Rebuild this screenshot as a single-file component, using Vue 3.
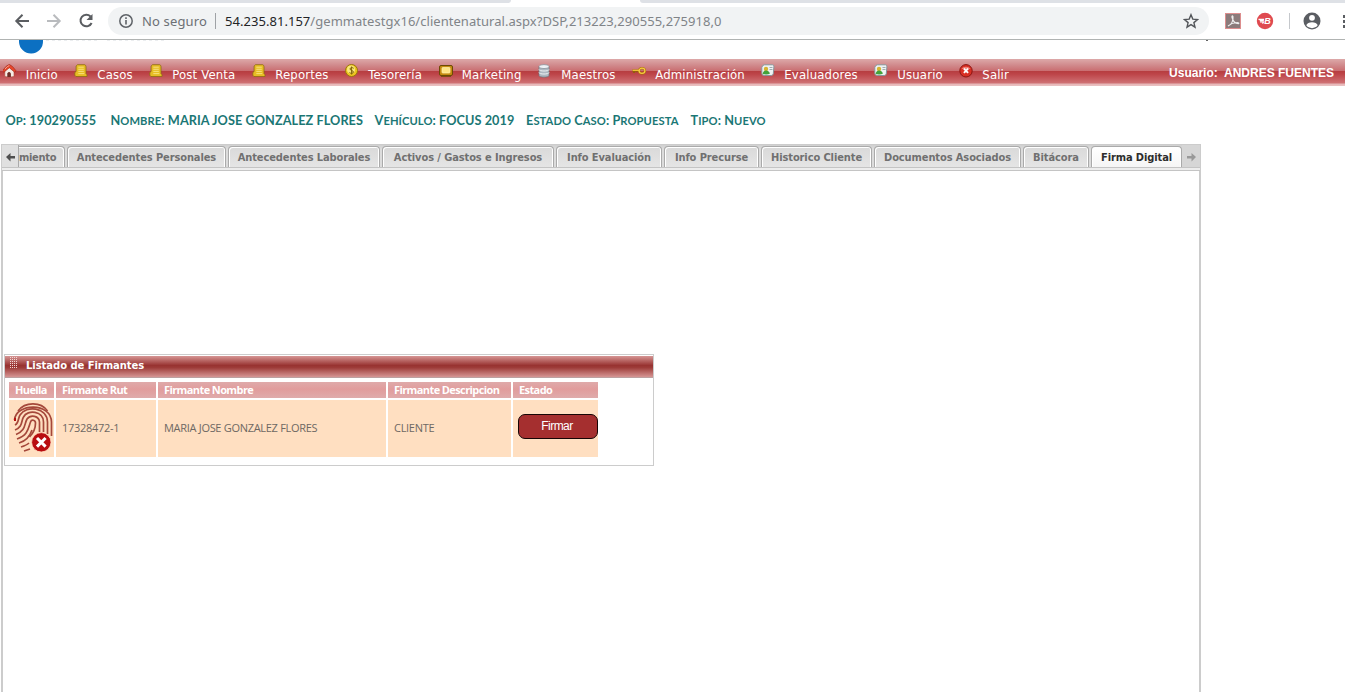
<script setup>
const menu = [
  { label: 'Inicio', icon: 'home', w: 71.5 },
  { label: 'Casos', icon: 'note', w: 75 },
  { label: 'Post Venta', icon: 'note', w: 103 },
  { label: 'Reportes', icon: 'note', w: 93 },
  { label: 'Tesorería', icon: 'coin', w: 93.5 },
  { label: 'Marketing', icon: 'screen', w: 99.5 },
  { label: 'Maestros', icon: 'db', w: 94 },
  { label: 'Administración', icon: 'key', w: 129 },
  { label: 'Evaluadores', icon: 'card', w: 113 },
  { label: 'Usuario', icon: 'card', w: 85 },
  { label: 'Salir', icon: 'close', w: 60 },
]
const facts = [
  { text: 'Op: 190290555', w: 105 },
  { text: 'Nombre: MARIA JOSE GONZALEZ FLORES', w: 264 },
  { text: 'Vehículo: FOCUS 2019', w: 151.5 },
  { text: 'Estado Caso: Propuesta', w: 164.5 },
  { text: 'Tipo: Nuevo', w: 90 },
].map((f) => ({
  ...f,
  runs: f.text.split(/([a-zí]+)/).filter(Boolean).map((s) => ({ s, small: /^[a-zí]/.test(s) })),
}))
const tabs = [
  { label: 'Antecedentes Personales', w: 159 },
  { label: 'Antecedentes Laborales', w: 152 },
  { label: 'Activos / Gastos e Ingresos', w: 172 },
  { label: 'Info Evaluación', w: 106 },
  { label: 'Info Precurse', w: 95 },
  { label: 'Historico Cliente', w: 111 },
  { label: 'Documentos Asociados', w: 147 },
  { label: 'Bitácora', w: 66 },
  { label: 'Firma Digital', w: 91, active: true },
]
</script>

<template>
  <div class="page">
    <div class="strip"><i class="s1"></i><i class="s2"></i></div>
    <div class="toolbar">
      <svg class="nav" width="100" height="30" viewBox="0 0 100 30" fill="none" stroke-width="2">
        <path d="M29 18H17M22.500 11.800L16.300 18l6.200 6.200" stroke="#5a5d61" />
        <path d="M47 18h12M53.500 11.800L59.700 18l-6.200 6.200" stroke="#b9bbbe" />
        <path d="M90.500 13.500A5.800 5.800 0 1 0 91.600 20" stroke="#5a5d61" />
        <path d="M92.500 11v6h-6z" fill="#5a5d61" />
      </svg>
      <div class="address">
        <svg class="info" width="16" height="16" viewBox="0 0 16 16">
          <circle cx="8" cy="8" r="6.200" fill="none" stroke="#5f6368" stroke-width="1.500" />
          <path d="M7.200 7h1.600v4.500H7.200zM7.200 4.300h1.600v1.600H7.200z" fill="#5f6368" />
        </svg>
        <span class="secure">No seguro</span>
        <i class="bar"></i>
        <span class="url"><b>54.235.81.157</b>/gemmatestgx16/clientenatural.aspx?DSP,213223,290555,275918,0</span>
        <svg class="star" width="16" height="16" viewBox="0 0 16 16">
          <path d="M8 1.700l1.800 4.400 4.700.4-3.600 3.100 1.100 4.600L8 11.700l-4 2.500 1.100-4.600-3.600-3.100 4.700-.4z" fill="none" stroke="#53565a" stroke-width="1.400" />
        </svg>
      </div>
      <svg class="exts" width="129" height="30" viewBox="0 0 129 30">
        <rect x="9.500" y="10.500" width="15" height="15" fill="#8b7b7b" stroke="#dc8e8e" />
        <path d="M12 23c3.500-1 5.500-5.500 5-9.500-.3-1.400-1.500-.5-1 1 1 3.600 3 6 6.300 6.200 1.300-.4.300-1.500-1.800-1.200-3 .3-6 1.300-8.500 3.500" fill="none" stroke="#eee" stroke-width="1.100" />
        <circle cx="49" cy="18" r="8.200" fill="#df4a50" />
        <path d="M42.500 16.300h5l-.3 1.300h-3.500M44 19h3.500l-1 1.600" fill="none" stroke="#fff" stroke-width="1.200" />
        <text x="48.200" y="21.200" class="ext-letter">B</text>
        <path d="M73.500 10v16" stroke="#c5c8cc" />
        <circle cx="96" cy="18" r="8.500" fill="#5a5d62" />
        <circle cx="96" cy="14.800" r="2.900" fill="#fff" />
        <path d="M90.300 22.200c1-4 10.400-4 11.400 0a7 7 0 0 1-11.400 0z" fill="#fff" />
        <path d="M127 12h2v3h-2zM127 17h2v3h-2zM127 22h2v3h-2z" fill="#5a5d62" />
      </svg>
    </div>

    <div class="masthead">
      <svg width="1345" height="19" viewBox="0 0 1345 19">
        <path d="M19 0h24v1a12 12 0 0 1-24 1z" fill="#0c70c2" />
        <path d="M46 .5h52M107 .5h60" stroke="#eceef0" stroke-dasharray="3 3" />
        <path d="M1207 0v1" stroke="#333" stroke-width="1.500" />
      </svg>
    </div>

    <nav class="menu">
      <div v-for="m in menu" :key="m.label" class="item" :style="{ width: m.w + 'px' }">
        <svg width="14" height="14" viewBox="0 0 14 14">
          <g v-if="m.icon === 'home'">
            <path d="M1.800 7L6 3l5 4v5.500q-4.500 1-9.200 0z" fill="#f6ece6" stroke="#b04a3c" stroke-width=".6" />
            <path d="M4.300 13V9.500q1.700-2.800 3.600 0V13z" fill="#6e2b25" />
            <path d="M-.5 6.800Q3.300 1 6.300.4 9.500 1.500 13 6.800L11.800 8.300 6.300 3.800.8 8.300z" fill="#e8472c" stroke="#9b2417" stroke-width=".6" />
            <path d="M2 5Q4.500 1.800 6.300 1.600" fill="none" stroke="#f9a58f" />
          </g>
          <g v-else-if="m.icon === 'note'">
            <path d="M3.500.7h7.200q1.300.5 1.300 2v7l1 1v1.800H2L.8 11.300V8.500l1.300-1V2z" fill="#e7bd24" stroke="#8c6c12" stroke-width=".8" />
            <path d="M4.300 3.200h5.500M4.300 5.300h5.500M4.300 7.400h5.500M4.300 9.600h6" stroke="#f8e384" stroke-width=".9" />
          </g>
          <g v-else-if="m.icon === 'coin'">
            <circle cx="6.500" cy="6.500" r="6" fill="#edc51f" stroke="#98770d" />
            <circle cx="6" cy="5.500" r="4" fill="#f9e77a" />
            <path d="M8.700 4.300C7.500 3.200 5 3.400 5 5s3.400 1.300 3.400 3S5.500 9.700 4.500 8.500M6.600 2.500v8" stroke="#806109" fill="none" />
          </g>
          <g v-else-if="m.icon === 'screen'">
            <rect x=".5" y="1.500" width="13" height="10" rx="1.500" fill="#c58b10" stroke="#6b4a05" />
            <rect x="3" y="3.500" width="8" height="5.500" rx=".8" fill="#ffe484" stroke="#fff3b5" stroke-width=".7" />
            <path d="M2 12.300h10" stroke="#6b4a05" />
          </g>
          <g v-else-if="m.icon === 'db'">
            <path d="M1 2.500v9c0 2.200 10 2.200 10 0v-9" fill="#aeb8c1" stroke="#6d767f" stroke-width=".7" />
            <ellipse cx="6" cy="2.600" rx="5" ry="2" fill="#eef2f5" stroke="#7f8992" stroke-width=".7" />
            <path d="M1 5.500c0 2 10 2 10 0M1 8.500c0 2 10 2 10 0" fill="none" stroke="#edf1f3" />
          </g>
          <g v-else-if="m.icon === 'key'" fill="none">
            <path d="M7.500 6.500H.3M2 6.500v2.400M4.500 6.500v1.800" stroke="#925f09" stroke-width="2" />
            <ellipse cx="10" cy="6.800" rx="3" ry="2.700" stroke="#a76b08" stroke-width="2.400" />
            <path d="M7.500 6.300H.5" stroke="#f6c63d" stroke-width="1.300" />
            <ellipse cx="10" cy="6.800" rx="2.900" ry="2.600" stroke="#f6ca43" stroke-width="1.300" />
          </g>
          <g v-else-if="m.icon === 'card'">
            <path d="M3.500.8h8q1.700.3 1.400 2l-.6 7q-.3 1.700-2 1.700h-7Q.8 11.500.8 9.500v-6Q1.200 1 3.500.8z" fill="#eef2f3" stroke="#87969b" />
            <path d="M8.500 3.500h3M8.500 5.500h3" stroke="#8c9ba0" stroke-width=".8" />
            <circle cx="5" cy="5" r="2.200" fill="#d7b431" />
            <path d="M1.500 10c.8-4.500 6-4.500 7.500-.5Q6.500 11 1.500 10z" fill="#42a23b" />
          </g>
          <g v-else>
            <circle cx="7" cy="6.800" r="6.200" fill="#d92f24" stroke="#8b1712" />
            <path d="M2.500 5a5 4 0 0 1 9 0" fill="#ef8278" />
            <path d="M4.900 4.700l4.200 4.200M9.100 4.700L4.900 8.900" stroke="#fff" stroke-width="1.900" />
          </g>
        </svg>
        <span>{{ m.label }}</span>
      </div>
      <div class="user">Usuario:&nbsp; ANDRES FUENTES</div>
    </nav>

    <div class="facts">
      <div v-for="f in facts" :key="f.text" :style="{ width: f.w + 'px' }"><span v-for="(r, i) in f.runs" :key="i" :class="{ small: r.small }">{{ r.s }}</span></div>
    </div>

    <section class="panel">
      <div class="tabs">
        <div class="arrow left">
          <svg width="10" height="10" viewBox="0 0 10 10"><path d="M0 5l4.500-4v3H9v2.500H4.500v3z" fill="#4f4f4f" /></svg>
        </div>
        <div class="tab cut">miento</div>
        <div v-for="t in tabs" :key="t.label" class="tab" :class="{ active: t.active }" :style="{ width: t.w + 'px' }">{{ t.label }}</div>
        <div class="arrow right">
          <svg width="10" height="10" viewBox="0 0 10 10"><path d="M10 5L5.500 1v3H1v2.500h4.500v3z" fill="#999" /></svg>
        </div>
      </div>

      <div class="body">
        <div class="list">
          <div class="list-head">
            <svg width="9" height="13" viewBox="0 0 9 13"><path d="M.5 0v12M2.500 0v12M4.500 0v12M6.500 0v12" stroke="#f1d6d4" stroke-dasharray="1 1" /></svg>
            <span>Listado de Firmantes</span>
          </div>
          <div class="grid">
            <div class="th">Huella</div>
            <div class="th">Firmante Rut</div>
            <div class="th">Firmante Nombre</div>
            <div class="th">Firmante Descripcion</div>
            <div class="th">Estado</div>
            <div class="td print">
              <svg width="46" height="57" viewBox="0 0 46 57" fill="none">
                <g stroke="#a5483b" stroke-width="1.700">
                  <path d="M9 11C16 1.500 32 1.500 38.500 11" />
                  <path d="M5.500 20C7 3 42 2 42.500 22v14" />
                  <path d="M6 25c4-2 3-7 5-10C17 5 38 7 38.500 22v12" />
                  <path d="M6 30c8-3 6-9 8.500-13 4-8 20-6 20 5v10" />
                  <path d="M7 34.500c10-4 8-10 11-15.500 4-5 12-3 12.500 3v10" />
                  <path d="M8 39c11-4 11-10 13.500-17 1-3 5-2 5 1 0 6-2 10-6 14" />
                  <path d="M10 43c7-2 11-7 13-13M12 47c3-1 6-2 8-4M15 51l6-2" />
                </g>
                <path d="M5 18h2v3H5z" fill="#b50f0f" />
                <circle cx="32.300" cy="42.300" r="9.700" fill="#b90d10" stroke="#ffe0c3" stroke-width=".8" />
                <path d="M28 38l8.600 8.600M36.600 38L28 46.600" stroke="#fff" stroke-width="3" />
              </svg>
            </div>
            <div class="td">17328472-1</div>
            <div class="td">MARIA JOSE GONZALEZ FLORES</div>
            <div class="td">CLIENTE</div>
            <div class="td action"><button>Firmar</button></div>
          </div>
        </div>
      </div>
    </section>
  </div>
</template>

<style>
body { background: #fff; }
</style>

<style scoped>
* { box-sizing: border-box; }
.page { width: 1345px; height: 692px; overflow: hidden; background: #fff; display: flex; flex-direction: column; white-space: nowrap; }
.page svg { display: block; flex: none; }
.strip { height: 3px; display: flex; justify-content: space-between; flex: none; }
.s1 { width: 511px; background: #dee1e6; border-bottom-right-radius: 4px; }
.s2 { width: 705px; background: #dee1e6; border-bottom-left-radius: 4px; }
.toolbar { height: 37px; border-bottom: 1px solid #b0b3b2; display: flex; flex: none; }
.address { width: 1101px; height: 28px; margin: 4px 0 0 8px; border-radius: 14px; background: #f1f3f4; display: flex; align-items: center; padding-left: 10px; font: 13px "Noto Sans", sans-serif; color: #6c7075; }
.secure { margin-left: 8px; width: 73px; letter-spacing: 0.15px; }
.bar { width: 1px; height: 16px; background: #9fa2a6; }
.url { margin-left: 9px; letter-spacing: 0.04px; color: #808488; }
.url b { font-weight: 400; color: #222426; }
.star { margin: 0 10px 0 auto; }
.exts { margin-left: 7px; }
.ext-letter { font: italic bold 9px "Liberation Sans", sans-serif; fill: #fff; }
.masthead { height: 19px; flex: none; }
.menu { height: 27px; flex: none; display: flex; padding-left: 3px; background: linear-gradient(#dda9a9 0, #d18b8d 6px, #c96d70 12px, #b63d40 12px, #bd4448 15px, #cf7174 24px, #e6b7b8 25px, #eac2c2 27px); }
.item { display: flex; flex: none; color: #fff; font: 13px "DejaVu Sans Condensed", "DejaVu Sans", sans-serif; letter-spacing: 0.16px; }
.item svg { margin: 5px 0 0 -0.5px; }
.item span { margin-left: 9.300px; line-height: 31px; }
.user { margin: 0 11px 0 auto; color: #fff; font: bold 12px/28px "Liberation Sans", sans-serif; }
.facts { height: 58px; flex: none; display: flex; padding: 0 0 0 5.500px; font: bold 12.700px/68px Lato, sans-serif; letter-spacing: 0.07px; color: #1b7775; }
.facts div { flex: none; }
.small { font-size: 11.200px; text-transform: uppercase; }
.panel { width: 1200px; margin-left: 1px; height: 548px; border: 2px solid #ccc; border-top-width: 1px; border-bottom: 0; flex: none; display: flex; flex-direction: column; }
.tabs { height: 26px; flex: none; margin: 0 -1px; display: flex; background: linear-gradient(#d0d0d0, #dcdcdc 4px, #dcdcdc 22px, #c4c4c4 22px, #c4c4c4 23px, #ededed 23px, #ededed 25px, #c4c4c4 25px); }
.tab { height: 21px; flex: none; margin: 1px 0 0 2px; padding-top: 1px; border: 1px solid #aaa; border-bottom: 0; border-radius: 4px 4px 0 0; box-shadow: inset 1px 1px #fff, inset -1px 0 #fff; background: linear-gradient(#d9d9d9, #e5e5e5); font: bold 11px/19px "DejaVu Sans Condensed", "DejaVu Sans", sans-serif; letter-spacing: -0.1px; color: #707070; text-align: center; }
.cut { width: 46px; margin-left: 0; border-left: 0; border-top-left-radius: 0; text-align: left; letter-spacing: -0.3px; box-shadow: inset -1px 1px #fff; }
.active { background: linear-gradient(#fff, #f5f5f5); color: #2d2d2d; }
.arrow { height: 22px; flex: none; display: flex; align-items: center; background: #e0e0e0; }
.left { width: 17px; padding: 2px 0 0 4px; border-right: 1px solid #aaa; }
.right { flex: 1; padding: 2px 0 0 4px; background: #d6d6d6; }
.body { flex: 1; padding: 183px 0 0 1px; }
.list { width: 650px; height: 112px; border: 1px solid #ccc; }
.list-head { height: 22px; margin-top: 1px; border-bottom: 1px solid #bda0a0; background: linear-gradient(#d69594, #983331 45%, #9d3b38 55%, #d69594); display: flex; padding-left: 5px; color: #fff; font: bold 10px/20px "DejaVu Sans", sans-serif; }
.list-head svg { margin-top: 1px; }
.list-head span { margin-left: 7px; letter-spacing: -0.05px; }
.grid { display: grid; grid-template-columns: 45px 100px 228px 123px 85px; grid-template-rows: 16px 57px; gap: 2px; padding: 4px 0 0 4px; font: 11px "Open Sans", sans-serif; }
.th { background: linear-gradient(#dfaaaa, #e19c9c 45%, #dfabab); color: #fff; font-weight: 700; line-height: 16px; padding-left: 6px; letter-spacing: -0.6px; }
.td { background: #ffdfc1; color: #6e6863; line-height: 56px; padding-left: 6px; letter-spacing: -0.3px; }
.print { padding: 0; }
.action { padding: 14px 0 0 5px; }
button { display: block; width: 80px; height: 25px; padding: 0 2px 0 0; border: 1px solid #160505; border-radius: 7px; background: #a52f2f; color: #fff; font: 12px/23px "Liberation Sans", sans-serif; letter-spacing: -0.55px; }
</style>
